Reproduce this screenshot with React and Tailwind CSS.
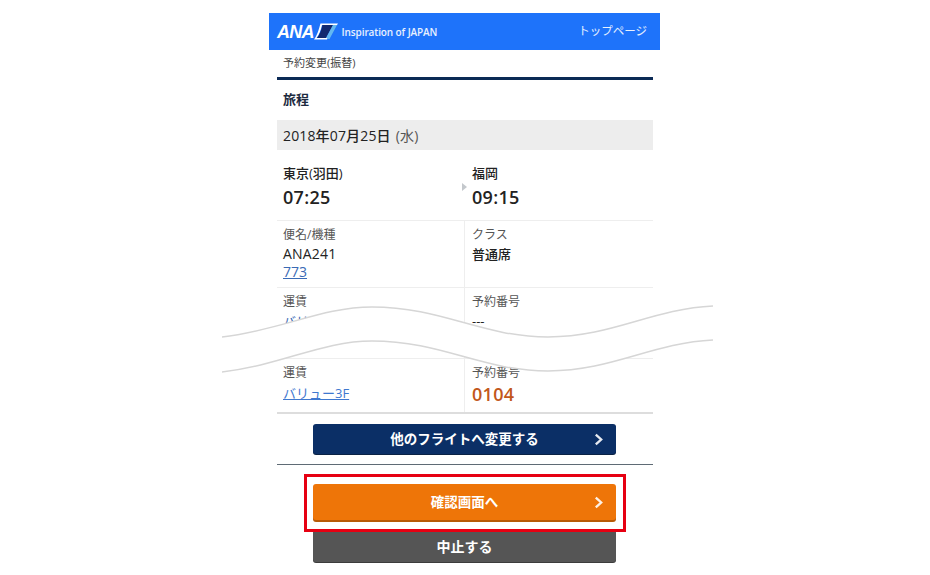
import React from 'react';

const font = { jp: 'font-["Open_Sans","Noto_Sans_CJK_JP",sans-serif]' };

const Chevron = ({ className }) => (
  <svg viewBox="0 0 10 14" className={`w-[9px] h-[13px] ${className}`} fill="none" stroke="currentColor" strokeWidth="2.6">
    <path d="M2 1.5 L8 7 L2 12.5" />
  </svg>
);

const Logo = () => (
  <div className="flex items-center">
    <span className='font-["Liberation_Sans",sans-serif] italic font-bold text-[18px] leading-none text-white tracking-[-0.8px]'>ANA</span>
    <svg viewBox="0 0 24 17" className="w-[24px] h-[17px]">
      <path d="M6.5 0.5 H24 L23 2 H8 C7 7 5 12 2.5 15 H14 L13 16.5 H0 C3 13 5 6 6.5 0.5 Z" fill="#ffffff" />
      <path d="M8.5 2 H19 L12 15 H3 C5.5 12 7.5 7 8.5 2 Z" fill="#12296e" />
      <path d="M19 2 H23 L15.5 16 H13 L13.5 15 H12 Z" fill="#63b8f0" />
    </svg>
    <span className="ml-[4px] mt-[2px] text-[10px] tracking-[-0.1px] font-semibold text-white/90">Inspiration of JAPAN</span>
  </div>
);

const Button = ({ label, bg, shadow, chevron, className = '' }) => (
  <div className={`relative w-[303px] rounded-[3px] flex items-center justify-center text-white font-bold text-[13.5px] ${bg} ${shadow} ${className}`}>
    {label}
    {chevron && <Chevron className="absolute right-[13px] text-white/90" />}
  </div>
);

export default function App() {
  return (
    <div className={`relative h-[575px] overflow-hidden bg-white text-[#222] ${font.jp}`}>
      <div className="ml-[269px] w-[391px] pt-[13px]">
        <header className="h-[37px] bg-[#1e73fa] flex items-center justify-between pl-[8px] pr-[13px]">
          <Logo />
          <span className="text-[11.5px] text-white/90 -mt-[2px]">トップページ</span>
        </header>

        <div className="pl-[8px] pr-[7px]">
          <div className="h-[27px] flex items-center pl-[6px] text-[11px] text-[#444] border-b-[3px] border-[#0b2a55] box-content">
            予約変更(振替)
          </div>

          <h2 className="h-[40px] flex items-center pl-[6px] text-[13px] font-semibold text-[#1c2a40]">旅程</h2>

          <div className="h-[30px] bg-[#ededed] flex items-center pl-[6px] text-[14px] font-medium tracking-[0.15px]">
            2018年07月25日<span className="ml-[5px] text-[14px] font-normal text-[#555]">(水)</span>
          </div>

          <div className="relative grid grid-cols-2 h-[71px] border-b border-[#eeeeee]">
            <div className="pl-[6px] pt-[14px]">
              <p className="text-[13px] leading-[18px] font-medium">東京(羽田)</p>
              <p className="mt-[3px] text-[18px] leading-[24px] font-semibold tracking-[0.3px]">07:25</p>
            </div>
            <div className="pl-[7px] pt-[14px]">
              <p className="text-[13px] leading-[18px] font-medium">福岡</p>
              <p className="mt-[3px] text-[18px] leading-[24px] font-semibold tracking-[0.3px]">09:15</p>
            </div>
            <span className="absolute left-[185px] top-[33px] w-0 h-0 border-y-[4px] border-y-transparent border-l-[5px] border-l-[#c4c8cc]" />
          </div>

          <div className="grid grid-cols-2 h-[67px] border-b border-[#eeeeee]">
            <div className="pl-[6px] pt-[5px] border-r border-[#eeeeee]">
              <p className="text-[12px] leading-[18px] text-[#555]">便名/機種</p>
              <p className="text-[14px] leading-[20px] font-medium tracking-[0.2px]">ANA241</p>
              <a className="block text-[14px] leading-[16px] text-[#3a6ab5] underline">773</a>
            </div>
            <div className="pl-[7px] pt-[5px]">
              <p className="text-[12px] leading-[18px] text-[#555]">クラス</p>
              <p className="text-[13px] leading-[20px] font-medium">普通席</p>
            </div>
          </div>

          <div className="grid grid-cols-2 h-[71px] border-b border-[#eeeeee]">
            <div className="pl-[6px] pt-[5px] border-r border-[#eeeeee]">
              <p className="text-[12px] leading-[18px] text-[#555]">運賃</p>
              <a className="block text-[13px] leading-[20px] text-[#3a6ab5] underline">バリュー3F</a>
            </div>
            <div className="pl-[7px] pt-[5px]">
              <p className="text-[12px] leading-[18px] text-[#555]">予約番号</p>
              <p className="text-[13px] leading-[20px] font-medium">---</p>
            </div>
          </div>

          <div className="grid grid-cols-2 h-[55px] border-b-2 border-[#dddddd]">
            <div className="pl-[6px] pt-[5px] border-r border-[#eeeeee]">
              <p className="text-[12px] leading-[18px] text-[#555]">運賃</p>
              <a className="block mt-[1px] text-[13px] leading-[20px] text-[#3f78cf] underline">バリュー3F</a>
            </div>
            <div className="pl-[7px] pt-[5px]">
              <p className="text-[12px] leading-[18px] text-[#555]">予約番号</p>
              <p className="text-[18px] leading-[24px] font-semibold tracking-[0.3px] text-[#c2571a]">0104</p>
            </div>
          </div>

          <div className="pt-[10px] pb-[10px] border-b border-[#5f6b75]">
            <Button label="他のフライトへ変更する" bg="bg-[#0b2f66]" shadow="shadow-[0_1px_0_#0a2244]" chevron className="h-[30px] ml-[36px]" />
          </div>

          <div className="relative z-10 ml-[27px] mt-[9px] w-[322px] h-[58px] border-[3px] border-[#e60012] flex items-center">
            <Button label="確認画面へ" bg="bg-[#ee7508]" shadow="shadow-[0_2px_0_#b85a06]" chevron className="h-[36px] ml-[6px] -mt-[2px]" />
          </div>

          <Button label="中止する" bg="bg-[#555555]" shadow="shadow-[0_1px_0_#3c3c3c]" className="h-[32px] ml-[36px] -mt-[2px] text-[14px]" />
        </div>
      </div>

      {/* torn-paper band that cuts the table */}
      <svg className="absolute left-[222px] top-[300px] w-[492px] h-[80px]" viewBox="0 0 492 80" fill="none">
        <path d="M0 37 C60 30 100 7 150 7 C220 7 260 37 326 37 C390 37 430 9 491 6 V40 C430 43 390 71 326 71 C260 71 220 41 150 41 C100 41 60 65 0 72 Z" fill="#ffffff" />
        <path d="M0 37 C60 30 100 7 150 7 C220 7 260 37 326 37 C390 37 430 9 491 6" stroke="#d6d6d6" strokeWidth="1.5" />
        <path d="M0 72 C60 65 100 41 150 41 C220 41 260 71 326 71 C390 71 430 43 491 40" stroke="#d6d6d6" strokeWidth="1.5" />
      </svg>
    </div>
  );
}
